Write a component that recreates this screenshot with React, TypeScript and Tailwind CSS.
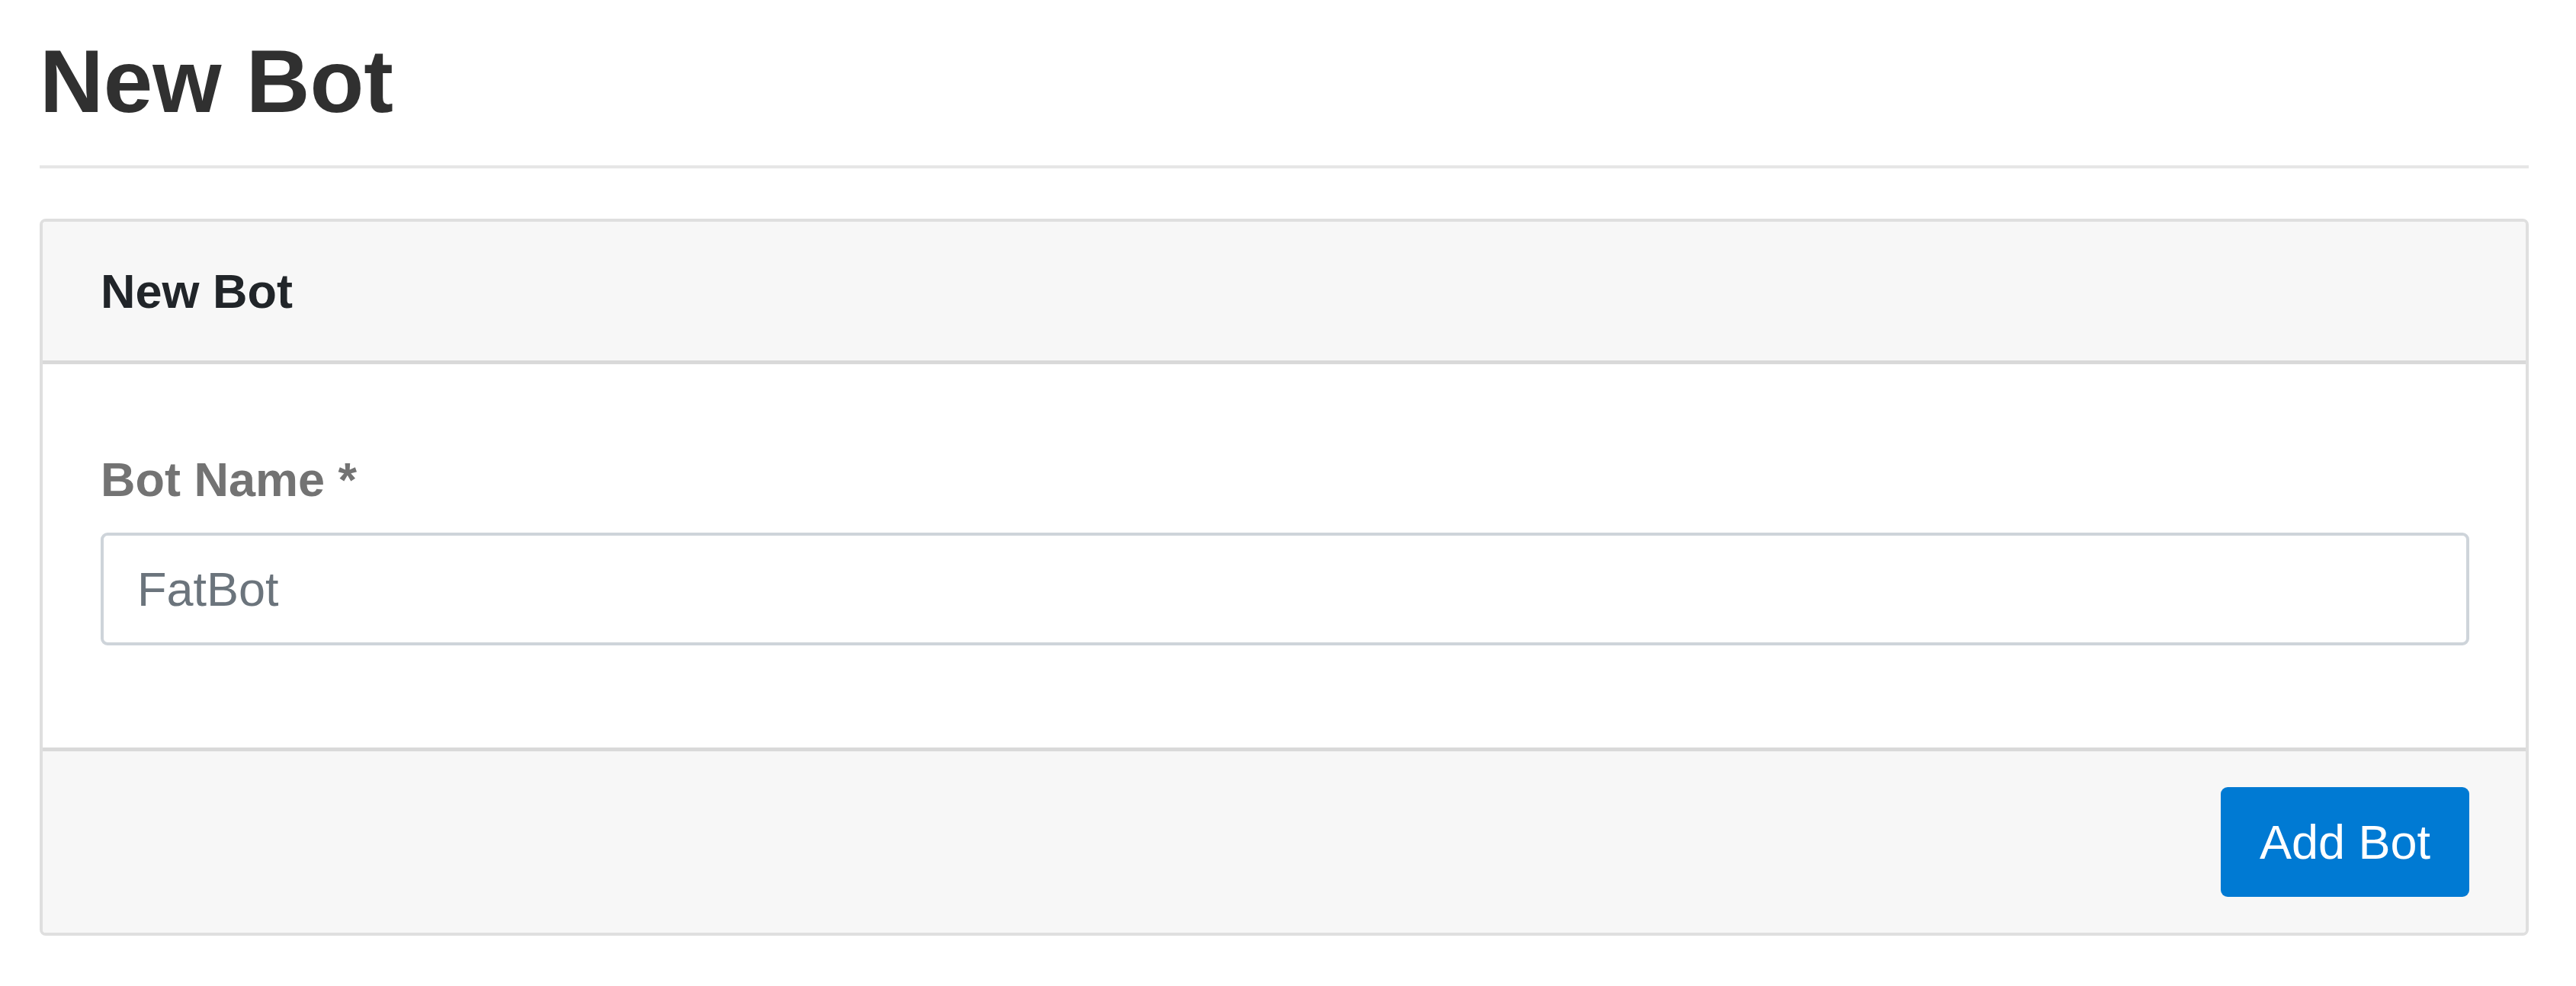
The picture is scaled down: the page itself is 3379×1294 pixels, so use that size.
export default function App() {
  return (
    <div className="min-h-screen bg-white pl-[52px] pr-[62px] pt-[38px] font-['Liberation_Sans',Arial,sans-serif]">
      <h1 className="text-[116px] font-bold leading-[139px] text-[#303030]">New Bot</h1>
      <hr className="mt-[40px] h-[4px] border-0 bg-[#e6e6e6]" />

      <div className="mt-[66px] overflow-hidden rounded-[8px] border-[4px] border-[#dfdfdf]">
        <div className="flex h-[187px] items-center border-b-[5px] border-[#d9d9d9] bg-[#f7f7f7] px-[76px]">
          <span className="text-[63px] font-bold leading-none text-[#212529]">New Bot</span>
        </div>

        <div className="bg-white pb-[134px] pl-[76px] pr-[74px] pt-[104px]">
          <label htmlFor="bot-name" className="mb-[23px] block text-[63px] font-bold leading-[94px] text-[#737373]">
            Bot Name *
          </label>
          <input
            id="bot-name"
            type="text"
            defaultValue="FatBot"
            className="block h-[148px] w-full rounded-[9px] border-[4px] border-[#ced4da] bg-white px-[44px] text-[63px] text-[#6b747c] outline-none"
          />
        </div>

        <div className="flex h-[243px] items-center justify-end border-t-[5px] border-[#d9d9d9] bg-[#f7f7f7] pl-[76px] pr-[74px]">
          <button
            type="button"
            className="flex h-[144px] w-[326px] items-center justify-center rounded-[9px] bg-[#007ad3] text-[63px] leading-none text-white"
          >
            Add Bot
          </button>
        </div>
      </div>
    </div>
  );
}
